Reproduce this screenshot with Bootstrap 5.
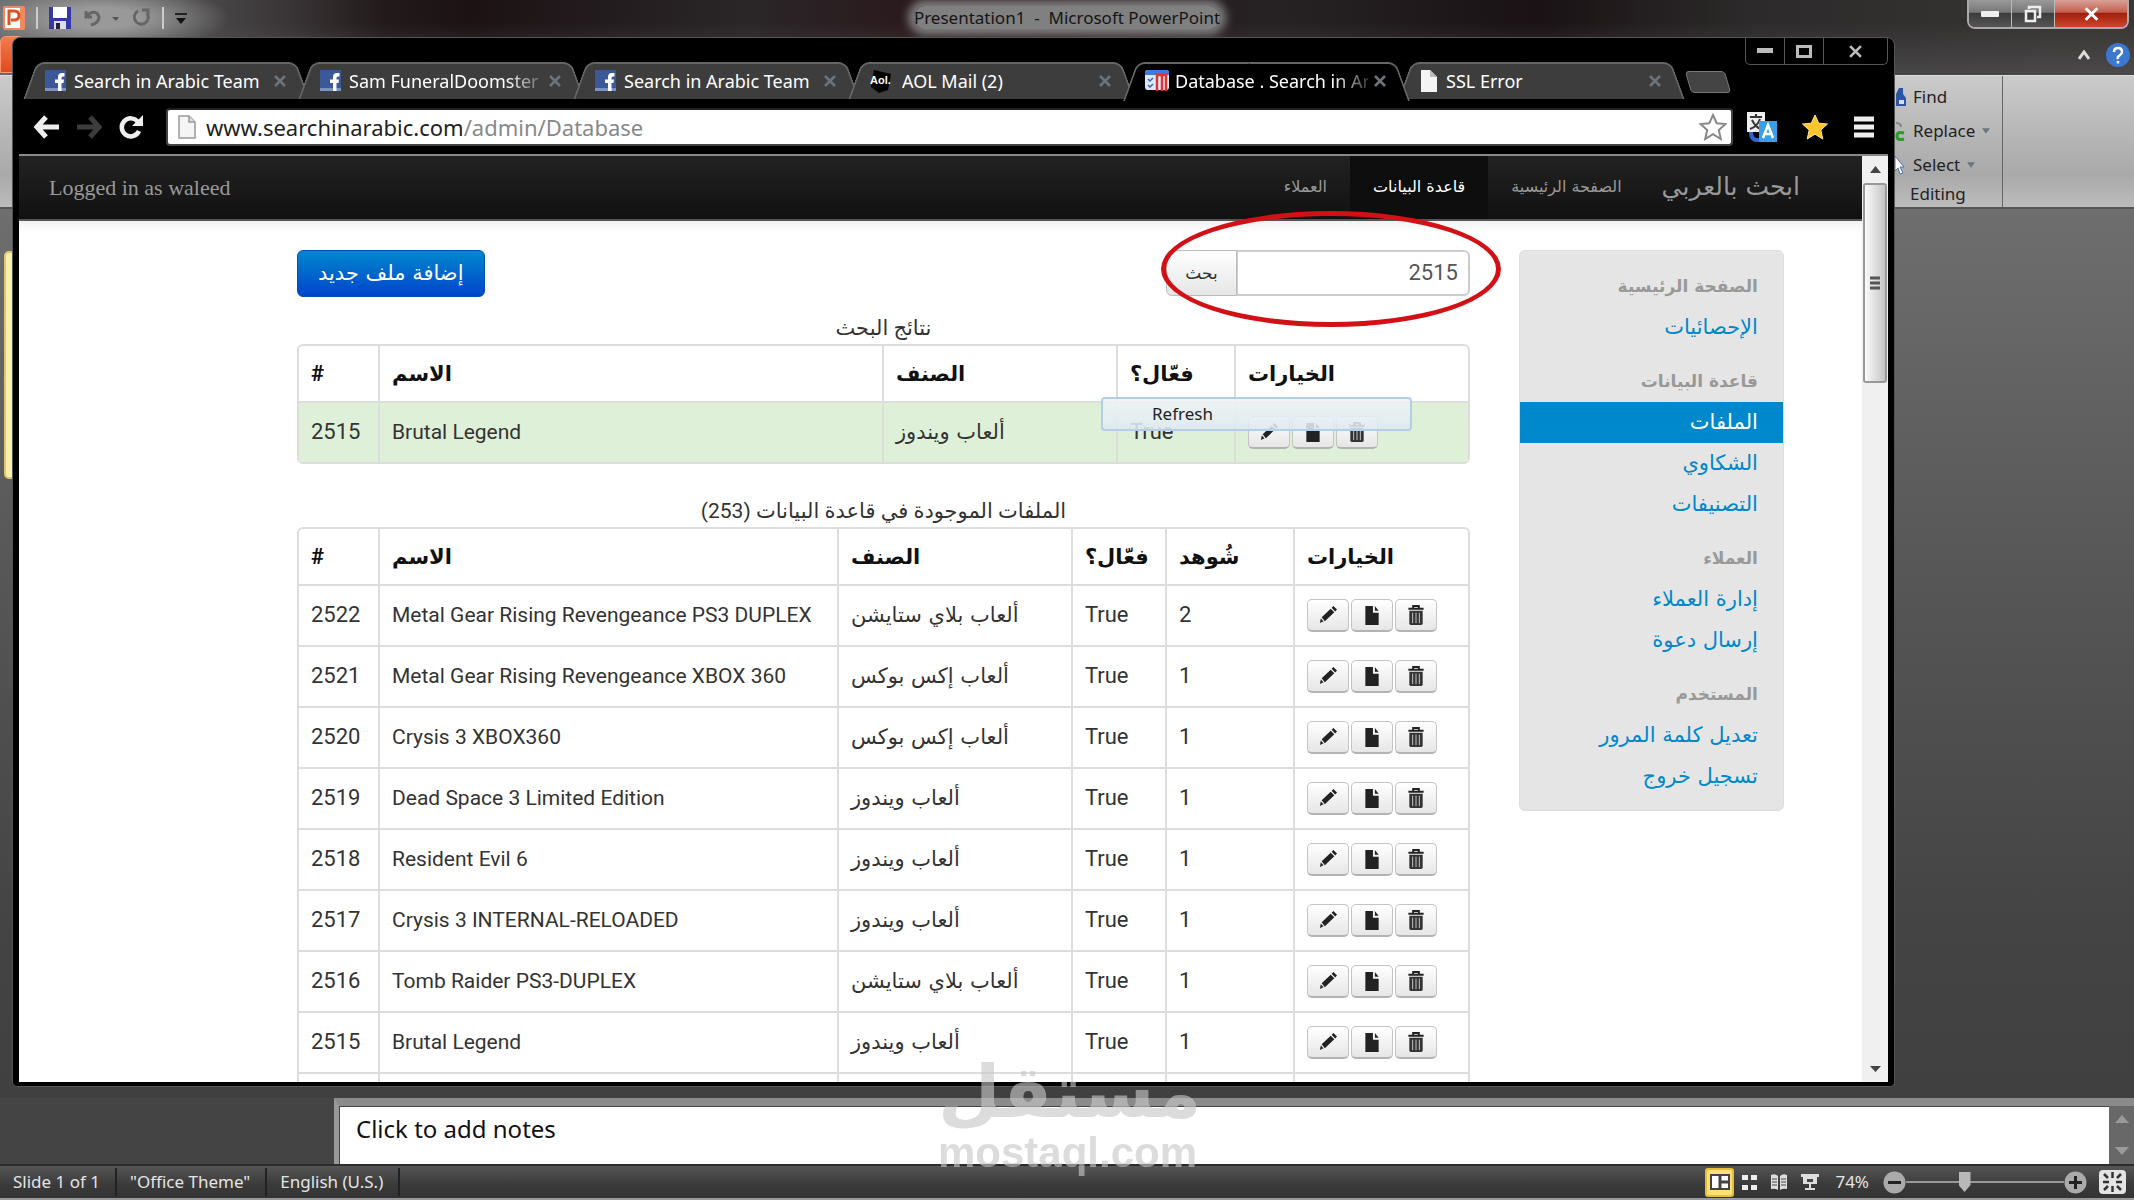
<!DOCTYPE html>
<html lang="ar">
<head>
<meta charset="utf-8">
<meta name="viewport" content="width=device-width, initial-scale=1">
<title>Database . Search in Arabic</title>
<link href="https://cdn.jsdelivr.net/npm/bootstrap@5.3.0/dist/css/bootstrap.min.css" rel="stylesheet">
<style>
:root{--ui:"Noto Sans","Open Sans","DejaVu Sans",sans-serif;--page:Roboto,"DejaVu Sans",sans-serif;--arabic:"DejaVu Sans",sans-serif}
body{font-family:var(--ui);font-size:18px;line-height:24px;background:#444;overflow:hidden}
svg{display:block;flex:none}
button{font-family:inherit}
.bare{background:none;border:0;padding:0;color:inherit}
.desk{height:100vh;position:relative}
/* PowerPoint */
.ppt-title{height:75px;background:radial-gradient(ellipse 130px 34px at 100px 18px,#999 30%,#9990),linear-gradient(90deg,#6a6a6a 0,#6a6a6a00 18%),linear-gradient(#0000 30%,#5a5a5a88),linear-gradient(90deg,#3c3c3c 0,#1c1214 22%,#2a2628 35%,#2a1418 46%,#262224 60%,#1a1214 72%,#2c2a2a 82%,#3a3636 100%)}
.ppt-quick{height:36px;padding-left:3px;gap:11px}
.ppt-caption{position:absolute;left:0;right:0;top:6px;text-align:center;color:#151515;font-size:17px;pointer-events:none}
.ppt-caption span{background:#808080;box-shadow:0 0 10px 6px #808080;border-radius:12px}
.ppt-winbtns{height:29px;margin-right:5px;border:2px solid #aaa;border-top:0;border-radius:0 0 8px 8px;overflow:hidden}
.ppt-winbtns button{width:43px;background:linear-gradient(#999,#777 45%,#3c3c3c 50%,#555);border-right:1px solid #bbb!important;display:flex;align-items:center;justify-content:center}
.ppt-winbtns .shut{width:72px;background:linear-gradient(#d9a096,#c4604f 45%,#a02010 50%,#d0452a);border:0!important}
.ppt-file{width:24px;height:37px;background:linear-gradient(#f47c50,#e04a1c);border:1px solid #ff9870;border-radius:6px 6px 0 0}
.ppt-ribbon{height:134px;background:linear-gradient(#cbcbcb,#b4b4b4 50%,#a9a9a9 75%,#bcbcbc);border-top:1px solid #ddd;border-bottom:2px solid #555;font-size:17px;color:#222}
.ppt-editing{width:112px;border-right:1px solid #666;padding:4px 0 0 3px}
.ppt-editing button{height:34px;display:flex;align-items:center;gap:7px}
.ppt-rest{width:131px}
.ppt-work{background:linear-gradient(#6e6e6e,#575757 40%,#444 80%,#404040)}
.ppt-thumb{position:absolute;left:4px;top:251px;width:30px;height:228px;background:#f7eeb0;border:2px solid #e0c860;border-radius:5px}
.ppt-notes{height:66px;margin-left:334px;border-left:5px solid #999;border-top:8px solid #8b8b8b;background:#fff}
.ppt-notes textarea{border:1px solid #444;border-right:0;border-bottom:0;resize:none;padding:6px 16px;font-size:24px;line-height:32px;color:#111;font-family:var(--ui);outline:0}
.ppt-scroll{width:25px;background:#686868;padding:9px 0}
.ppt-status{height:36px;background:linear-gradient(#555,#3a3a3a 60%,#333);border-top:2px solid #2c2c2c;border-bottom:2px solid #999;color:#e4e4e4;font-size:17px}
.ppt-status .seg{padding:0 15px 0 13px;border-right:2px solid #222;line-height:28px}
.ppt-status .seg,.ppt-status label{white-space:nowrap}
.ppt-views{gap:14px}
.ppt-view{width:29px;height:29px;margin-right:-6px;background:#fbe07a;border:2px solid #e6bc38!important;border-radius:3px;display:flex;align-items:center;justify-content:center}
.ppt-status label{padding:0 14px 0 16px}
.zoomer{appearance:none;width:158px;height:20px;background:linear-gradient(#999,#999) center/100% 2px no-repeat;margin:0}
.zoomer::-webkit-slider-thumb{appearance:none;width:12px;height:20px;background:#b8b8b8;clip-path:polygon(0 0,100% 0,100% 65%,50% 100%,0 65%)}
/* browser */
.brw{position:absolute;left:12px;right:239px;top:37px;bottom:113px;background:#000;border:1px solid #555;border-radius:8px 8px 5px 5px;padding:0 6px 4px;display:flex;flex-direction:column}
.brw-btns{position:absolute;right:6px;top:0;height:27px;border:1px solid #555;border-top:0;border-radius:0 0 5px 5px;color:#bbb}
.brw-btns button{width:39px;border-right:1px solid #555!important;display:flex;align-items:center;justify-content:center}
.brw-btns .shut{width:63px;border:0!important}
.tabs{height:61px;padding:24px 0 0 4px;list-style:none;margin:0}
.tab{position:relative;width:275px;height:37px;padding:0 12px 0 22px;display:flex;align-items:center;gap:8px;color:#fff;flex:0 0 auto}
.tab::before,.tab::after{content:"";position:absolute;top:0;bottom:0;background:#3d3d3d;border-top:2px solid #666;z-index:0}
.tab::before{left:7px;width:140px;transform:skewX(-20deg);border-left:2px solid #666;border-radius:8px 0 0 0}
.tab::after{right:-5px;width:147px;transform:skewX(20deg);border-right:2px solid #666;border-radius:0 8px 0 0}
.tab>*{position:relative;z-index:2}
.tab .lbl{flex:1;min-width:0;overflow:hidden;white-space:nowrap;color:inherit;text-decoration:none;line-height:28px}
.tab .fade-end{-webkit-mask:linear-gradient(90deg,#000 82%,#0003);mask:linear-gradient(90deg,#000 82%,#0003)}
.tab.current{z-index:3;gap:6px}
.tab.current::before,.tab.current::after{background:#000;height:39px}
.newtab{width:40px;height:22px;margin:9px 0 0 15px;background:#444!important;border:1px solid #777!important;border-radius:4px;transform:skewX(16deg)}
.toolbar-row{height:55px;padding:9px 13px 8px 15px;gap:14px}
.omni{height:38px;background:#fff;border:2px solid #444;border-top-color:#222;border-radius:4px;gap:10px;padding:0 4px 0 10px}
.omni .url{font-size:22px;line-height:30px;color:#888;outline:0}
.omni b{font-weight:400;color:#222}
.view{border-top:2px solid #888}
.site-nav{height:65px;background:linear-gradient(#222,#111);border-bottom:2px solid #555;font-family:"Liberation Serif","DejaVu Sans",serif;font-size:22px;color:#999;padding:0 44px 0 30px}
.site-nav a{font-family:var(--arabic);color:#999;text-decoration:none;height:63px;display:flex;align-items:center;font-size:16px;padding:0 23px 2px;white-space:nowrap}
.site-nav a.active{background:#0e0e0e;color:#fff}
.site-nav a.logo{font-size:25px;padding:0 18px 2px 17px}
.site-main{padding:29px 78px 0 278px;gap:49px;box-shadow:inset 0 12px 10px -8px #eee;font-family:var(--page);font-size:22px;color:#333}
.add{height:47px;padding:0 20px 2px;color:#fff;font-family:var(--arabic);font-size:21px;border:1px solid #0052b0;border-radius:6px;background:linear-gradient(#08c,#04c)}
.find{height:46px;width:304px}
.find button{flex:0 0 71px;border:1px solid #bbb;border-radius:6px 0 0 6px;background:linear-gradient(#fff,#e6e6e6);font-family:var(--arabic);font-size:17px;color:#333}
.find input{border:2px solid #ccc;border-left-width:1px;border-radius:0 6px 6px 0;text-align:right;color:#555;padding:0 10px;min-width:0;font-family:inherit;font-size:22px}
.cap{font-size:21px;height:47px;padding-top:16px;line-height:30px}
.cap2{height:63px;padding-top:32px}
.grid{border:2px solid #ddd;border-radius:6px;border-collapse:separate;border-spacing:0;table-layout:fixed;margin:0;color:#333;line-height:30px;--bs-table-bg:transparent}
.grid th,.grid td{border:0;border-left:2px solid #ddd;padding:0 12px;white-space:nowrap;vertical-align:middle;overflow:hidden}
.grid td{border-top:2px solid #ddd;height:61px;padding-bottom:2px}
.grid th{height:55px;color:#111}
.grid tr>:first-child{border-left:0}
.grid td:nth-child(2){font-size:21px}
.grid .hit{background:#dff0d8}
.grid .ar{font-family:var(--arabic);font-size:21px}
.acts{display:flex;gap:2px;padding-top:2px}
.acts button{width:42px;height:33px;border:1px solid #c4c4c4;border-bottom:2px solid #b3b3b3;border-radius:5px;background:linear-gradient(#fff,#e6e6e6);display:flex;align-items:center;justify-content:center;padding:0}
.side{width:265px;background:#e5e5e5;border:1px solid #ddd;border-radius:6px;padding:15px 0 13px;text-align:right;direction:rtl;font-family:var(--arabic)}
.side h6,.side a{display:block;margin:0;padding:0 25px;height:41px;line-height:41px}
.side h6{font-size:17px;font-weight:700;color:#999}
.side a{font-size:21px;color:#08c;text-decoration:none}
.side a+h6{margin-top:13px}
.side a.active{background:#08c;color:#fff}
.vbar{width:26px;background:#f0f0f0}
.vbar .grip{height:200px;margin:0 1px;border:2px solid #999;border-radius:3px;background:linear-gradient(90deg,#fafafa,#ddd 55%,#c4c4c8)}
.ctx{position:absolute;left:1101px;top:397px;width:311px;height:34px;border:2px solid #b4cde8;border-radius:4px;background:linear-gradient(#f0f4f8e0,#dfe9f1e0);padding:0 0 0 49px;font-size:17px;line-height:30px;color:#222;text-align:left}
.ring{position:absolute;left:1161px;top:211px;width:340px;height:116px;border:5px solid #d31016;border-radius:50%;pointer-events:none}
.wm{position:absolute;left:938px;top:1052px;width:258px;color:#c8c8c8;opacity:.62;pointer-events:none;text-align:center}
.wm .w1{font:700 72px/80px "DejaVu Sans",sans-serif;height:76px}
.wm .w2{font:700 42px/50px "Liberation Sans",sans-serif}
</style>
</head>
<body>
<svg width="0" height="0" class="position-absolute">
<symbol id="pen" viewBox="0 0 20 20"><path d="M1 19l1-5 3 3zM3 12.500 13 3l4 4L6.500 17zM14 2l2-2 4 4-2 2z" fill="#222"/></symbol>
<symbol id="doc" viewBox="0 0 16 20"><path d="M1 0h8v7h6v13H1z" fill="#222"/><path d="M11 0l4 5h-4z" fill="#222"/></symbol>
<symbol id="bin" viewBox="0 0 18 22"><path d="M1 4h16M6 4V1h6v3" stroke="#222" stroke-width="2" fill="none"/><path d="M2 6h14v13q0 2-2 2H4q-2 0-2-2z" fill="#333"/><path d="M5.500 8v11M9 8v11M12.500 8v11" stroke="#ccc"/></symbol>
<symbol id="fb" viewBox="0 0 21 21"><path fill="#3b5998" d="M0 0h21v21H0z"/><path fill="#7d92c4" d="M0 18h21v3H0z"/><path d="M13 21v-8h-3V9.500h3V7q0-4 4-4h2.500v3.500H18q-1.500 0-1.500 1.500v1.500H19l-.5 3.500h-2v8z" fill="#fff"/></symbol>
<symbol id="x" viewBox="0 0 12 12"><path d="M1 1l10 10M11 1L1 11" stroke="currentColor" stroke-width="2.500"/></symbol>
<symbol id="page" viewBox="0 0 18 24"><path d="M1 1h10l6 6v16H1z" fill="#f5f5f5" stroke="#999" stroke-width="1.500"/><path d="M11 1v6h6" fill="#ddd" stroke="#999" stroke-width="1.500"/></symbol>
<symbol id="dn" viewBox="0 0 10 7"><path d="M0 0h10L5 7z" fill="currentColor"/></symbol>
<symbol id="star" viewBox="0 0 28 28"><path d="M14 2l3.700 8.200 8.800.8-6.700 6 2 9L14 21.200 6.200 26l2-9-6.700-6 8.800-.8z"/></symbol>
</svg>
<div class="desk d-flex flex-column">
  <header class="ppt-title position-relative flex-shrink-0">
    <div class="d-flex justify-content-between align-items-start">
      <div class="ppt-quick d-flex align-items-center">
        <svg width="22" height="24" viewBox="0 0 22 24"><rect width="22" height="24" rx="2" fill="#f08a60"/><rect x="2" y="2" width="15" height="20" fill="#fff"/><path d="M6 19V5h5q5 0 5 4.500T11 14H8" stroke="#d9541e" stroke-width="3" fill="none"/></svg>
        <svg width="2" height="22"><path d="M1 0v22" stroke="#ccc" stroke-width="2"/></svg>
        <svg width="22" height="22" viewBox="0 0 22 22"><path fill="#3638a8" d="M0 0h22v22H0z"/><path fill="#fff" d="M4 0h14v11H4z"/><path fill="#dde" d="M5 14h12v8H5z"/><path fill="#223" d="M7 16h4v6H7z"/></svg>
        <svg width="40" height="20" viewBox="0 0 40 20" fill="none" stroke="#666" stroke-width="3"><path d="M4 3v6h6M4 8q10-8 13 1 0 6-8 8"/><path d="M30 9h7l-3 4z" fill="#555" stroke="none"/></svg>
        <svg width="18" height="20" viewBox="0 0 18 20" fill="none" stroke="#666" stroke-width="3"><path d="M5 3a7 7 0 1 0 9 2M9 2h6v7"/></svg>
        <svg width="2" height="22"><path d="M1 0v22" stroke="#ccc" stroke-width="2"/></svg>
        <svg width="12" height="11" viewBox="0 0 12 11"><path d="M0 1h12" stroke="#222" stroke-width="2"/><path d="M1 5h10l-5 6z" fill="#111"/></svg>
      </div>
      <div class="ppt-winbtns d-flex">
        <button class="bare" aria-label="Minimize"><svg width="18" height="8"><rect width="18" height="6" y="1" rx="1" fill="#eee"/></svg></button>
        <button class="bare" aria-label="Restore"><svg width="18" height="18" fill="none" stroke="#eee" stroke-width="2.500"><path d="M5 4V2h11v10h-3"/><path d="M2 6h9v10H2z"/></svg></button>
        <button class="bare shut text-white" aria-label="Close"><svg width="15" height="14"><use href="#x"/></svg></button>
      </div>
    </div>
    <div class="ppt-caption"><span>Presentation1&nbsp; - &nbsp;Microsoft PowerPoint</span></div>
    <div class="d-flex justify-content-between">
      <div class="ppt-file"></div>
      <div class="d-flex align-items-center gap-3 me-1">
        <svg width="12" height="10"><path d="M1 9l5-7 5 7" stroke="#ddd" stroke-width="3" fill="none"/></svg>
        <svg width="24" height="24" viewBox="0 0 24 24"><circle cx="12" cy="12" r="12" fill="#3b78d0"/><path d="M8 9q0-4 4-4t4 4q0 2-2.500 3.500T12 16M12 18v2.500" stroke="#fff" stroke-width="2.500" fill="none"/></svg>
      </div>
    </div>
  </header>
  <section class="ppt-ribbon d-flex justify-content-end flex-shrink-0">
    <div class="ppt-editing">
      <button class="bare"><svg width="12" height="22"><path d="M2 20V8l3-6h4v6l3 4v8z" fill="#2c55a8"/><path d="M5 14h5v4H5z" fill="#dde"/></svg>Find</button>
      <button class="bare"><svg width="12" height="22"><path d="M2 3q5 0 5 4" stroke="#888" fill="none" stroke-width="2"/><path d="M10 13q-7-2-7 3t7 3" stroke="#2a9a2a" stroke-width="3" fill="none"/></svg>Replace<svg width="8" height="6" class="text-secondary"><use href="#dn"/></svg></button>
      <button class="bare"><svg width="12" height="22"><path d="M1 2l9 11H6l3 6-3 1-2-6-3 3z" fill="#fff" stroke="#4b74a8"/></svg>Select<svg width="8" height="6" class="text-secondary"><use href="#dn"/></svg></button>
      <div class="ps-3">Editing</div>
    </div>
    <div class="ppt-rest"></div>
  </section>
  <div class="ppt-work flex-grow-1"></div>
  <div class="ppt-thumb"></div>
  <section class="ppt-notes d-flex flex-shrink-0">
    <textarea class="flex-grow-1" aria-label="Notes">Click to add notes</textarea>
    <div class="ppt-scroll d-flex flex-column justify-content-between align-items-center">
      <svg width="14" height="8"><path d="M0 8h14L7 0z" fill="#999"/></svg><svg width="14" height="8"><path d="M0 0h14L7 8z" fill="#999"/></svg>
    </div>
  </section>
  <footer class="ppt-status d-flex align-items-center flex-shrink-0">
    <span class="seg">Slide 1 of 1</span><span class="seg">"Office Theme"</span><span class="seg">English (U.S.)</span>
    <div class="ms-auto d-flex align-items-center me-2">
      <div class="ppt-views d-flex align-items-center">
      <button class="bare ppt-view" aria-label="Normal"><svg width="20" height="16"><path d="M1 1h18v14H1z" fill="#fff" stroke="#444" stroke-width="2"/><path d="M10 1v14M10 8h9" stroke="#444" stroke-width="3"/></svg></button>
      <svg width="15" height="15" fill="#eee"><path d="M0 0h6v5H0zM9 0h6v5H9zM0 10h6v5H0zM9 10h6v5H9z"/></svg>
      <svg width="16" height="17"><path d="M0 1q4-2 7 1v14q-3-2-7-1zM16 1q-4-2-7 1v14q3-2 7-1z" fill="#ddd"/><path d="M1 5h5M1 8h5M1 11h5M10 5h5M10 8h5M10 11h5" stroke="#444"/></svg>
      <svg width="18" height="17" fill="#ddd"><path d="M0 0h18v3H0zM2 3h14v7H2zM8 10h2v4h4v2H4v-2h4z"/><path d="M6 5h6v3H6z" fill="#444"/></svg>
      </div>
      <label for="zm">74%</label>
      <button class="bare" aria-label="Zoom out"><svg width="23" height="23"><circle cx="11.500" cy="11.500" r="11" fill="#aaa"/><path d="M5 11.500h13" stroke="#222" stroke-width="3"/></svg></button>
      <input type="range" id="zm" class="zoomer" min="0" max="100" value="36">
      <button class="bare" aria-label="Zoom in"><svg width="23" height="23"><circle cx="11.500" cy="11.500" r="11" fill="#aaa"/><path d="M5 11.500h13M11.500 5v13" stroke="#222" stroke-width="3"/></svg></button>
      <button class="bare ps-2 ms-1" aria-label="Fit"><svg width="27" height="24"><rect width="27" height="24" rx="4" fill="#e4e4e4"/><path d="M13.500 2v6M13.500 16v6M4 12h6M17 12h6M5 4l4 4M22 4l-4 4M5 20l4-4M22 20l-4-4" stroke="#333" stroke-width="2.500"/></svg></button>
    </div>
  </footer>

  <div class="brw">
    <div class="brw-btns d-flex">
      <button class="bare" aria-label="Minimize"><svg width="16" height="6"><path fill="#bbb" d="M0 0h16v5H0z"/></svg></button>
      <button class="bare" aria-label="Maximize"><svg width="16" height="13"><path fill="none" stroke="#bbb" stroke-width="3" d="M1.500 1.500h13v10h-13z"/></svg></button>
      <button class="bare shut" aria-label="Close"><svg width="13" height="13"><use href="#x"/></svg></button>
    </div>
    <ul class="tabs d-flex">
      <li class="tab"><svg width="21" height="21"><use href="#fb"/></svg><a href="#" class="lbl">Search in Arabic Team</a><button class="bare text-secondary" aria-label="Close tab"><svg width="12" height="12"><use href="#x"/></svg></button></li>
      <li class="tab"><svg width="21" height="21"><use href="#fb"/></svg><a href="#" class="lbl fade-end">Sam FuneralDoomster</a><button class="bare text-secondary" aria-label="Close tab"><svg width="12" height="12"><use href="#x"/></svg></button></li>
      <li class="tab"><svg width="21" height="21"><use href="#fb"/></svg><a href="#" class="lbl">Search in Arabic Team</a><button class="bare text-secondary" aria-label="Close tab"><svg width="12" height="12"><use href="#x"/></svg></button></li>
      <li class="tab"><svg width="24" height="24" viewBox="0 0 24 24"><path d="M4 1l17 4-3 16-9 3L1 18z" fill="#000"/><text x="0" y="15" font-family="Liberation Sans" font-weight="700" font-size="11" fill="#fff">Aol.</text></svg><a href="#" class="lbl">AOL Mail (2)</a><button class="bare text-secondary" aria-label="Close tab"><svg width="12" height="12"><use href="#x"/></svg></button></li>
      <li class="tab current"><svg width="24" height="22" viewBox="0 0 24 22"><rect width="24" height="20" rx="3" fill="#dce8fa"/><path d="M0 3q0-3 3-3h18q3 0 3 3v2H0z" fill="#3b7ae0"/><path d="M3 9l2 2 3-3M3 15l2 2 3-3" stroke="#36a" fill="none" stroke-width="1.500"/><path d="M12 3v18M17 3v18M21 3v18M11 5h11" stroke="#d33" stroke-width="2.500"/></svg><a href="#" class="lbl fade-end">Database . Search in Ar</a><button class="bare text-secondary" aria-label="Close tab"><svg width="12" height="12"><use href="#x"/></svg></button></li>
      <li class="tab"><svg width="18" height="22"><path d="M1 0h9l7 7v15H1z" fill="#f4f4f4"/><path d="M10 0v7h7" fill="#bbb"/></svg><a href="#" class="lbl">SSL Error</a><button class="bare text-secondary" aria-label="Close tab"><svg width="12" height="12"><use href="#x"/></svg></button></li>
      <li><button class="bare newtab" aria-label="New tab"></button></li>
    </ul>
    <div class="toolbar-row d-flex align-items-center">
      <div class="d-flex align-items-center gap-3 pe-2">
      <button class="bare" aria-label="Back"><svg width="26" height="24"><path d="M12 2L3 12l9 10M4 12h21" stroke="#eee" stroke-width="5" fill="none"/></svg></button>
      <button class="bare" aria-label="Forward"><svg width="26" height="24"><path d="M14 2l9 10-9 10M22 12H1" stroke="#3c3c3c" stroke-width="5" fill="none"/></svg></button>
      <button class="bare" aria-label="Reload"><svg width="26" height="26"><path d="M20 8a9 9 0 1 0 1 9" stroke="#eee" stroke-width="4.500" fill="none"/><path d="M25 1v11H14z" fill="#eee"/></svg></button>
      </div>
      <div class="omni flex-grow-1 d-flex align-items-center">
        <svg width="18" height="24"><use href="#page"/></svg>
        <div class="url flex-grow-1" role="textbox" aria-label="Address"><b>www.searchinarabic.com</b>/admin/Database</div>
        <button class="bare" aria-label="Bookmark"><svg width="28" height="28" fill="#fff" stroke="#888" stroke-width="2"><use href="#star"/></svg></button>
      </div>
      <div class="d-flex align-items-center gap-4">
      <svg width="30" height="30" viewBox="0 0 30 30"><path fill="#eee" d="M0 0h18v20H0z"/><path d="M3 5h12M9 2v3M5 8q4 8 9 9M13 7q-3 8-10 10" stroke="#333" stroke-width="2" fill="none"/><path d="M4 20q0 9 8 8" stroke="#36c" stroke-width="4" fill="none"/><path fill="#3a9fe4" d="M12 9h18v21H12z"/><path d="M16 26l5-13 5 13M18 22h7" stroke="#fff" stroke-width="2.500" fill="none"/></svg>
      <svg width="28" height="28" fill="#fbc62c" stroke="#ffe58a"><use href="#star"/></svg>
      <button class="bare" aria-label="Menu"><svg width="22" height="22"><path d="M1 3h20M1 11h20M1 19h20" stroke="#eee" stroke-width="5"/></svg></button>
      </div>
    </div>
    <div class="view d-flex flex-grow-1 bg-white overflow-hidden">
      <div class="flex-grow-1 overflow-hidden">
        <nav class="site-nav d-flex align-items-center justify-content-between">
          <span>Logged in as waleed</span>
          <div class="d-flex">
            <a href="#">العملاء</a><a href="#" class="active">قاعدة البيانات</a><a href="#">الصفحة الرئيسية</a><a href="#" class="logo">ابحث بالعربي</a>
          </div>
        </nav>
        <div class="site-main d-flex align-items-start">
          <main class="flex-grow-1">
            <div class="d-flex justify-content-between align-items-start">
              <button class="add">إضافة ملف جديد</button>
              <form class="find d-flex"><button type="button">بحث</button><input class="flex-grow-1" type="text" aria-label="بحث" value="2515"></form>
            </div>
            <div class="cap text-center" dir="rtl">نتائج البحث</div>
            <table class="grid w-100">
              <colgroup><col style="width:79px"><col><col style="width:234px"><col style="width:118px"><col style="width:234px"></colgroup>
              <thead><tr><th>#</th><th class="ar">الاسم</th><th class="ar">الصنف</th><th class="ar"><span dir="rtl">فعّال؟</span></th><th class="ar">الخيارات</th></tr></thead>
              <tbody><tr class="hit"><td>2515</td><td>Brutal Legend</td><td class="ar">ألعاب ويندوز</td><td>True</td><td><div class="acts"><button aria-label="Edit"><svg width="20" height="18"><use href="#pen"/></svg></button><button aria-label="File"><svg width="16" height="19"><use href="#doc"/></svg></button><button aria-label="Delete"><svg width="18" height="21"><use href="#bin"/></svg></button></div></td></tr></tbody>
            </table>
            <div class="cap cap2 text-center" dir="rtl">الملفات الموجودة في قاعدة البيانات (253)</div>
            <table class="grid w-100" id="files">
              <colgroup><col style="width:79px"><col><col style="width:234px"><col style="width:94px"><col style="width:128px"><col style="width:175px"></colgroup>
              <thead><tr><th>#</th><th class="ar">الاسم</th><th class="ar">الصنف</th><th class="ar"><span dir="rtl">فعّال؟</span></th><th class="ar">شُوهد</th><th class="ar">الخيارات</th></tr></thead>
              <tbody></tbody>
            </table>
          </main>
          <aside class="side flex-shrink-0">
            <h6>الصفحة الرئيسية</h6><a href="#">الإحصائيات</a>
            <h6>قاعدة البيانات</h6><a href="#" class="active">الملفات</a><a href="#">الشكاوي</a><a href="#">التصنيفات</a>
            <h6>العملاء</h6><a href="#">إدارة العملاء</a><a href="#">إرسال دعوة</a>
            <h6>المستخدم</h6><a href="#">تعديل كلمة المرور</a><a href="#">تسجيل خروج</a>
          </aside>
        </div>
      </div>
      <div class="vbar d-flex flex-column justify-content-between flex-shrink-0">
        <div>
          <svg width="26" height="27"><path d="M8 17h11l-5.500-7z" fill="#444"/></svg>
          <div class="grip d-flex align-items-center justify-content-center"><svg width="12" height="14"><path d="M1 2h10M1 7h10M1 12h10" stroke="#555" stroke-width="3"/></svg></div>
        </div>
        <svg width="26" height="22"><path d="M8 6h11l-5.500 6z" fill="#444"/></svg>
      </div>
    </div>
  </div>
  <button class="ctx">Refresh</button>
  <div class="ring"></div>
  <div class="wm"><div class="w1">مستقل</div><div class="w2">mostaql.com</div></div>
</div>
<script>
const ps="ألعاب بلاي ستايشن",xb="ألعاب إكس بوكس",pc="ألعاب ويندوز";
const rows=[[2522,"Metal Gear Rising Revengeance PS3 DUPLEX",ps,2],[2521,"Metal Gear Rising Revengeance XBOX 360",xb,1],[2520,"Crysis 3 XBOX360",xb,1],[2519,"Dead Space 3 Limited Edition",pc,1],[2518,"Resident Evil 6",pc,1],[2517,"Crysis 3 INTERNAL-RELOADED",pc,1],[2516,"Tomb Raider PS3-DUPLEX",ps,1],[2515,"Brutal Legend",pc,1]];
const acts=document.querySelector(".acts").outerHTML;
document.querySelector("#files tbody").innerHTML=rows.map(r=>`<tr><td>${r[0]}</td><td>${r[1]}</td><td class="ar">${r[2]}</td><td>True</td><td>${r[3]}</td><td>${acts}</td></tr>`).join("")+"<tr>"+"<td></td>".repeat(6)+"</tr>";
</script>
<script src="https://cdn.jsdelivr.net/npm/bootstrap@5.3.0/dist/js/bootstrap.bundle.min.js"></script>
</body>
</html>
